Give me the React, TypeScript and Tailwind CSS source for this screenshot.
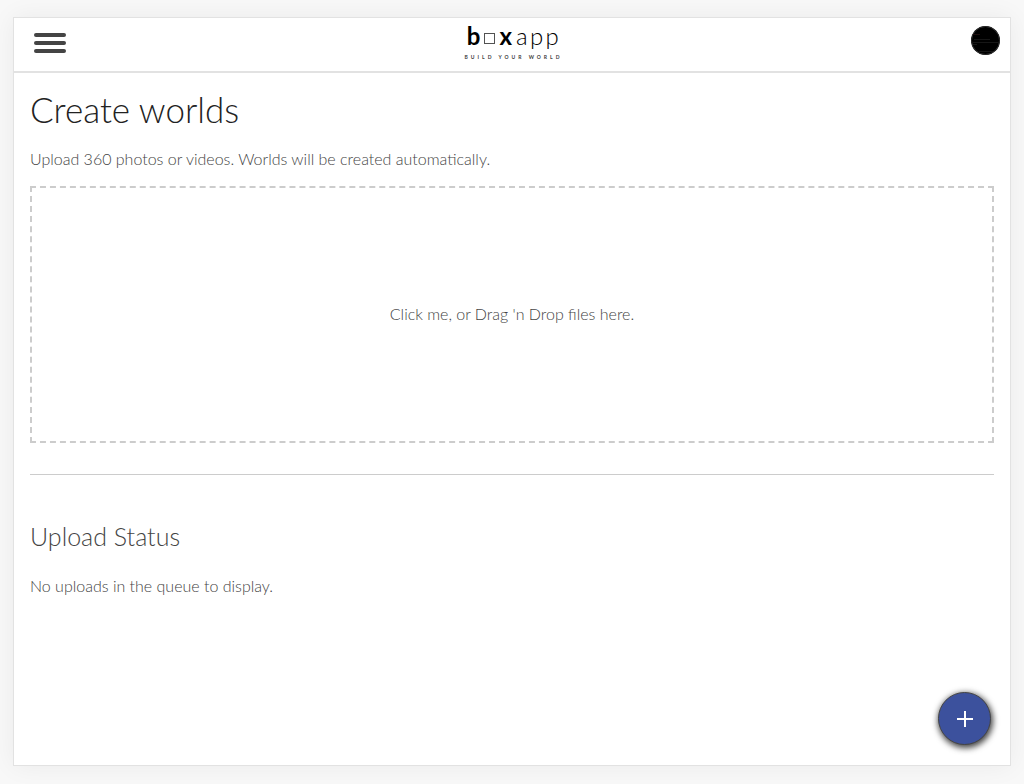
import { useState } from 'react';

function Logo() {
  return (
    <a href="#home" aria-label="boxapp, build your world" className="flex flex-col items-center text-black">
      <span className="flex h-7 items-center pl-1 text-2xl leading-7">
        <span className="font-bold">b</span>
        <span className="mx-1 mt-1 h-[11px] w-[11px] border border-neutral-600" />
        <span className="font-bold">x</span>
        <span className="ml-1 font-light tracking-widest">app</span>
      </span>
      <span className="mt-1 pl-[3px] text-[5px] font-bold leading-[6px] tracking-[3px] text-neutral-700">
        BUILD YOUR WORLD
      </span>
    </a>
  );
}

function Header() {
  return (
    <header className="flex h-[55px] items-start border-b-2 border-[#e2e2e2] pr-[10px] pl-5">
      <div className="flex-1">
        <button aria-label="Menu" className="mt-[15px] flex w-8 flex-col gap-1">
          <span className="h-1 w-full rounded-full bg-[#444]" />
          <span className="h-1 w-full rounded-full bg-[#444]" />
          <span className="h-1 w-full rounded-full bg-[#444]" />
        </button>
      </div>
      <div className="-ml-[10px] flex justify-center pt-1">
        <Logo />
      </div>
      <div className="flex flex-1 justify-end">
        <button aria-label="Account" className="mt-2 h-[29px] w-[29px] overflow-hidden rounded-full bg-black">
          <svg viewBox="0 0 29 29" className="h-full w-full" fill="none">
            <circle cx="14.5" cy="14.5" r="14" stroke="#333" />
            <path d="M3 13.5h16M2 16.5h25M2 18.5h4M8 25.5h14" stroke="#161616" />
            <path d="M2 8.5h7" stroke="#1f1010" />
          </svg>
        </button>
      </div>
    </header>
  );
}

export default function App() {
  const [files, setFiles] = useState<string[]>([]);

  return (
    <div className="flex min-h-screen flex-col bg-[#f8f8f8] px-[13px] pt-[17px] pb-[18px] font-['Lato',sans-serif] font-light text-[#444]">
      <div className="relative flex flex-1 flex-col border border-[#e2e2e2] bg-white shadow-[0_0_24px_rgba(0,0,0,0.06)]">
        <Header />
        <main className="flex flex-col px-4 pt-[14px]">
          <h1 className="text-[35px] leading-[44px] text-[#222]">Create worlds</h1>
          <p className="mt-4 leading-6">
            Upload 360 photos or videos. Worlds will be created automatically.
          </p>
          <label className="mt-[15px] flex h-[257px] cursor-pointer items-center justify-center border-2 border-dashed border-[#ccc] pb-[2px] leading-6">
            <input
              type="file"
              multiple
              className="sr-only"
              onChange={(e) => setFiles(Array.from(e.target.files ?? []).map((f) => f.name))}
            />
            Click me, or Drag 'n Drop files here.
          </label>
          <hr className="mt-[31px] border-[#ccc]" />
          <h2 className="mt-[45px] text-[25px] leading-8">Upload Status</h2>
          {files.length === 0 ? (
            <p className="mt-[22px] leading-6">No uploads in the queue to display.</p>
          ) : (
            <ul className="mt-[22px] leading-6">
              {files.map((name) => (
                <li key={name}>{name}</li>
              ))}
            </ul>
          )}
        </main>
        <button
          aria-label="Add world"
          className="absolute right-[19px] bottom-5 flex h-[53px] w-[53px] items-center justify-center rounded-full border border-[#444] bg-[#3c519d] text-white shadow-[1px_2px_6px_1px_rgba(0,0,0,0.75)]"
        >
          <svg viewBox="0 0 16 16" className="h-4 w-4" fill="none" stroke="currentColor" strokeWidth="2">
            <path d="M8 0v16M0 8h16" />
          </svg>
        </button>
      </div>
    </div>
  );
}
